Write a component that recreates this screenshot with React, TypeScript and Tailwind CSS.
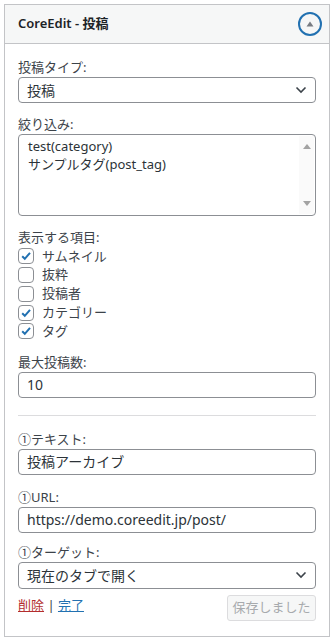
import React from 'react';

const FONT = { fontFamily: '"Noto Sans", "Noto Sans CJK JP", sans-serif' };

const Label: React.FC<{ children: React.ReactNode }> = ({ children }) => (
  <div className="text-[13px] leading-[18px] text-[#3c434a] mb-[1px]">{children}</div>
);

const Chevron = () => (
  <svg width="12" height="8" viewBox="0 0 12 8" className="shrink-0">
    <path d="M1.5 1.5 L6 6 L10.5 1.5" fill="none" stroke="#3c434a" strokeWidth="1.6" />
  </svg>
);

const FakeSelect: React.FC<{ value: string; h?: string }> = ({ value, h = 'h-[26px]' }) => (
  <div className={`${h} flex items-center justify-between border border-[#8c8f94] rounded-[4px] bg-white pl-[8px] pr-[8px]`}>
    <span className="text-[14px] text-[#2c3338]">{value}</span>
    <Chevron />
  </div>
);

const TextBox: React.FC<{ value: string }> = ({ value }) => (
  <div className="h-[26px] flex items-center border border-[#8c8f94] rounded-[4px] bg-white px-[8px]">
    <span className="text-[14px] text-[#2c3338]">{value}</span>
  </div>
);

const Check: React.FC<{ checked: boolean; label: string }> = ({ checked, label }) => (
  <div className="h-[18.75px] flex items-center gap-[8px]">
    <span className="w-[16px] h-[16px] rounded-[4px] border border-[#8c8f94] bg-white flex items-center justify-center">
      {checked && (
        <svg width="12" height="12" viewBox="0 0 12 12">
          <path d="M2.2 6.2 L4.8 8.8 L10 2.8" fill="none" stroke="#2271b1" strokeWidth="2" />
        </svg>
      )}
    </span>
    <span className="text-[13px] text-[#3c434a]">{label}</span>
  </div>
);

export default function App() {
  return (
    <div className="min-h-screen bg-white pl-[4px] pt-[4px]" style={FONT}>
      <div className="w-[326px] border border-[#c3c4c7] bg-white">
        {/* Header */}
        <div className="h-[39px] bg-[#f6f7f7] border-b border-[#c3c4c7] flex items-center justify-between pl-[13px] pr-[7px]">
          <span className="text-[13px] font-semibold text-[#1d2327]">CoreEdit - 投稿</span>
          <span className="w-[24px] h-[24px] rounded-full border-2 border-[#2271b1] flex items-center justify-center">
            <svg width="8" height="6" viewBox="0 0 8 6">
              <path d="M4 0.5 L7.5 5.5 L0.5 5.5 Z" fill="#787c82" />
            </svg>
          </span>
        </div>

        {/* Body */}
        <div className="px-[13px] pt-[14px] pb-[15px]">
          <Label>投稿タイプ:</Label>
          <FakeSelect value="投稿" />

          <div className="mt-[12px]">
            <Label>絞り込み:</Label>
            <div className="h-[82px] flex border border-[#8c8f94] rounded-[4px] bg-white">
              <div className="flex-1 pt-[2px] pl-[9px] text-[13px] leading-[18px] text-[#2c3338]">
                <div>test(category)</div>
                <div>サンプルタグ(post_tag)</div>
              </div>
              <div className="w-[15px] my-[1px] mr-[1px] bg-[#fafafa] flex flex-col items-center justify-between py-[8px]">
                <svg width="8" height="5" viewBox="0 0 8 5">
                  <path d="M4 0 L8 5 L0 5 Z" fill="#a3a3a3" />
                </svg>
                <svg width="8" height="5" viewBox="0 0 8 5">
                  <path d="M0 0 L8 0 L4 5 Z" fill="#a3a3a3" />
                </svg>
              </div>
            </div>
          </div>

          <div className="mt-[12px]">
            <Label>表示する項目:</Label>
            <div className="flex flex-col">
              <Check checked label="サムネイル" />
              <Check checked={false} label="抜粋" />
              <Check checked={false} label="投稿者" />
              <Check checked label="カテゴリー" />
              <Check checked label="タグ" />
            </div>
          </div>

          <div className="mt-[12px]">
            <Label>最大投稿数:</Label>
            <TextBox value="10" />
          </div>

          <div className="mt-[17px] border-t border-[#dcdcde]" />

          <div className="mt-[14px]">
            <Label>①テキスト:</Label>
            <TextBox value="投稿アーカイブ" />
          </div>

          <div className="mt-[13px]">
            <Label>①URL:</Label>
            <TextBox value="https://demo.coreedit.jp/post/" />
          </div>

          <div className="mt-[10px]">
            <Label>①ターゲット:</Label>
            <FakeSelect value="現在のタブで開く" h="h-[27px]" />
          </div>

          <div className="mt-[6px] flex items-start justify-between">
            <div className="text-[13px] leading-[18px] text-[#3c434a] pt-[1px]">
              <span className="text-[#b32d2e] underline">削除</span>
              <span> | </span>
              <span className="text-[#2271b1] underline">完了</span>
            </div>
            <div className="w-[89px] h-[26px] border border-[#dcdcde] rounded-[3px] bg-[#f6f7f7] flex items-center justify-center text-[13px] text-[#a7aaad]">
              保存しました
            </div>
          </div>
        </div>
      </div>
    </div>
  );
}
